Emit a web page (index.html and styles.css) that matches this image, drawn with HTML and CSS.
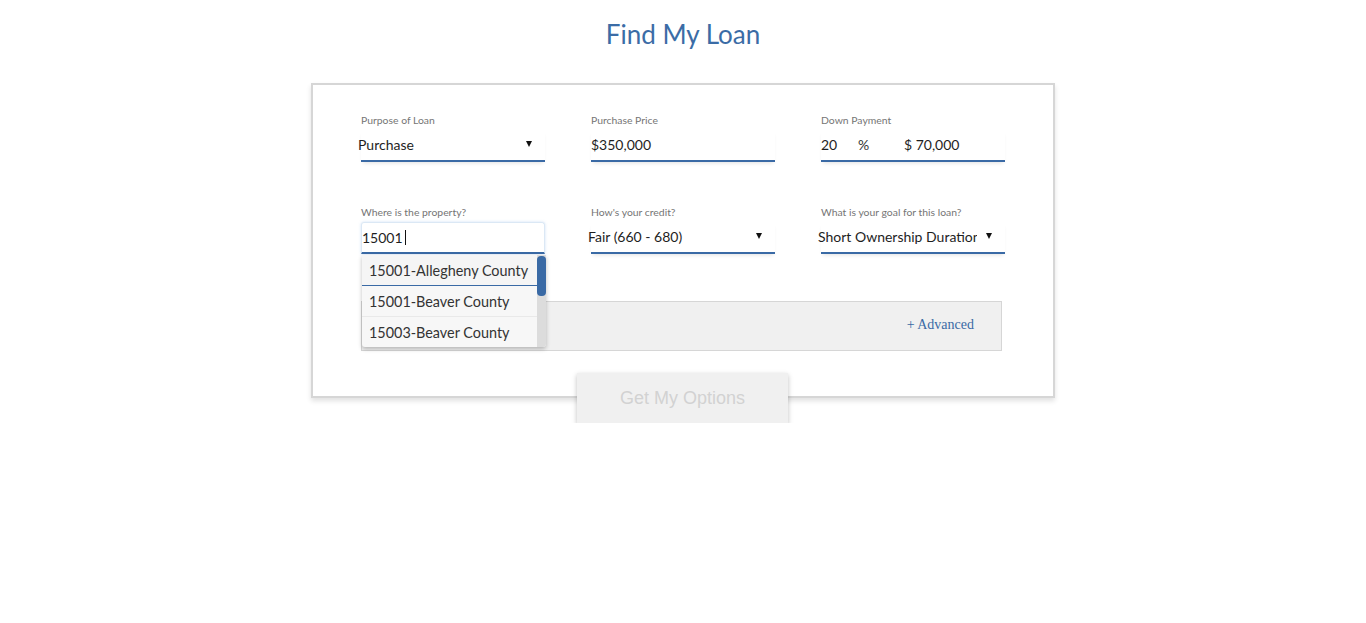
FILE: index.html
```html
<!DOCTYPE html>
<html>
<head>
<meta charset="utf-8">
<title>Find My Loan</title>
<link rel="stylesheet" href="styles.css">
</head>
<body>
<h1 class="title">Find My Loan</h1>
<div class="card">
  <div class="grid">
    <div class="field">
      <label class="label">Purpose of Loan</label>
      <div class="value select">
        <span class="select-text">Purchase</span>
        <span class="arrow"></span>
      </div>
    </div>
    <div class="field">
      <label class="label">Purchase Price</label>
      <div class="value">$350,000</div>
    </div>
    <div class="field">
      <label class="label">Down Payment</label>
      <div class="value down">
        <span class="pct-num">20</span>
        <span class="pct-sign">%</span>
        <span class="amount">$ 70,000</span>
      </div>
    </div>

    <div class="field row2">
      <label class="label">Where is the property?</label>
      <div class="value input-focus">15001<span class="caret"></span></div>
      <ul class="suggest">
        <li class="item active">15001-Allegheny County</li>
        <li class="item">15001-Beaver County</li>
        <li class="item last">15003-Beaver County</li>
        <li class="scrollbar"><span class="thumb"></span></li>
      </ul>
    </div>
    <div class="field row2">
      <label class="label">How's your credit?</label>
      <div class="value select">
        <span class="select-text">Fair (660 - 680)</span>
        <span class="arrow"></span>
      </div>
    </div>
    <div class="field row2">
      <label class="label">What is your goal for this loan?</label>
      <div class="value select">
        <span class="select-text">Short Ownership Duration</span>
        <span class="arrow"></span>
      </div>
    </div>
  </div>

  <div class="advanced">
    <a class="adv-link">+ Advanced</a>
  </div>
</div>
<div class="btn-row">
  <button class="btn">Get My Options</button>
</div>
</body>
</html>
```
FILE: styles.css
```css
html, body {
  margin: 0;
  padding: 0;
  background: #fff;
}
body {
  font-family: Lato, "Open Sans", Arial, sans-serif;
  color: #222;
}
.title {
  margin: 0;
  padding-top: 18px;
  line-height: 32px;
  font-size: 26px;
  font-weight: 400;
  text-align: center;
  color: #3b6ca6;
}
.card {
  box-sizing: border-box;
  width: 744px;
  margin: 33px auto 0;
  border: 2px solid #d6d6d6;
  background: #fff;
  box-shadow: 0 3px 5px rgba(0, 0, 0, 0.12);
  padding: 29px 48px 45px;
  position: relative;
  z-index: 1;
}
.grid {
  display: grid;
  grid-template-columns: 184px 184px 184px;
  column-gap: 46px;
  row-gap: 44px;
}
.field {
  position: relative;
}
.label {
  display: block;
  font-size: 10.4px;
  line-height: 12px;
  color: #757575;
}
.value {
  margin-top: 4px;
  height: 30px;
  line-height: 30px;
  font-size: 14px;
  color: #1e1e1e;
  border-bottom: 2px solid #3a6aa5;
  box-shadow: 0 3px 4px -2px rgba(0, 0, 0, 0.12);
  white-space: nowrap;
}
.select {
  display: flex;
  align-items: center;
  padding-right: 13px;
}
.select-text {
  flex: 1;
  margin-left: -3px;
  margin-right: 9px;
  overflow: hidden;
  white-space: nowrap;
}
.arrow {
  width: 0;
  height: 0;
  border-left: 3px solid transparent;
  border-right: 3px solid transparent;
  border-top: 6px solid #111;
  margin-top: -2px;
}
.down {
  display: flex;
}
.pct-num {
  width: 37px;
}
.pct-sign {
  width: 46px;
  color: #333;
}
.input-focus {
  box-sizing: border-box;
  height: 32px;
  border: 1px solid #dbe8f5;
  border-bottom: 2px solid #3a6aa5;
  border-radius: 3px 3px 0 0;
  box-shadow: 0 0 3px rgba(120, 170, 225, 0.35);
  line-height: 30px;
  display: flex;
  align-items: center;
}
.caret {
  display: inline-block;
  width: 1px;
  height: 15px;
  background: #111;
  margin-left: 2px;
}
.suggest {
  position: absolute;
  left: 1px;
  top: 49px;
  width: 184px;
  margin: 0;
  padding: 0;
  list-style: none;
  background: #f7f7f7;
  box-shadow: 0 2px 4px rgba(0, 0, 0, 0.25);
  border-radius: 0 0 3px 3px;
  overflow: hidden;
  z-index: 5;
}
.item {
  box-sizing: border-box;
  height: 31px;
  line-height: 31px;
  padding-left: 7px;
  padding-right: 10px;
  font-size: 14.4px;
  color: #333;
  border-bottom: 1px solid #e9e9e9;
  white-space: nowrap;
  overflow: hidden;
}
.item.active {
  background: #f5f5f5;
  border-bottom: 1px solid #3a6aa5;
}
.item.last {
  height: 30px;
  border-bottom: none;
}
.scrollbar {
  position: absolute;
  top: 0;
  right: 0;
  width: 9px;
  height: 100%;
  background: #dcdcdc;
}
.thumb {
  position: absolute;
  top: 1px;
  left: 0;
  width: 9px;
  height: 40px;
  border-radius: 4px;
  background: #3a6aa5;
}
.advanced {
  box-sizing: border-box;
  width: 641px;
  height: 50px;
  margin-top: 47px;
  background: #f0f0f0;
  border: 1px solid #d6d6d6;
  display: flex;
  align-items: center;
  justify-content: flex-end;
  padding-right: 27px;
}
.adv-link {
  font-family: "Liberation Serif", "Times New Roman", serif;
  font-size: 14px;
  line-height: 16px;
  margin-top: -2px;
  color: #3a6aa5;
}
.btn-row {
  display: flex;
  justify-content: center;
  margin-top: -25px;
  position: relative;
  z-index: 2;
}
.btn {
  width: 211px;
  height: 50px;
  border: none;
  background: #f0f0f0;
  color: #d2d2d2;
  font-family: "Liberation Sans", Arial, sans-serif;
  font-size: 18px;
  line-height: 48px;
  box-shadow: 0 2px 5px rgba(0, 0, 0, 0.25);
  padding: 0;
  margin-left: -1px;
}
```
